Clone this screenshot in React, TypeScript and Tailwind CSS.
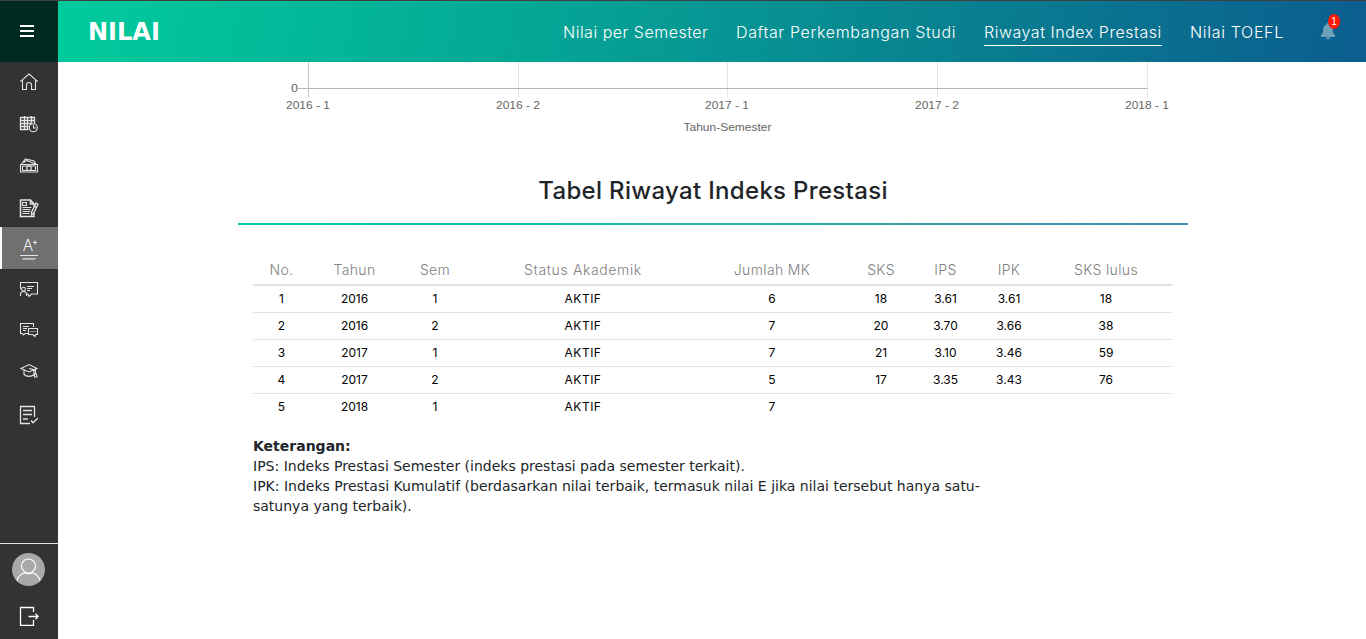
import type { ReactNode } from "react";

const NAV = [
  { label: "Nilai per Semester", style: "w-[145px] tracking-[0.5px]" },
  { label: "Daftar Perkembangan Studi", style: "w-[220px] tracking-[0.65px]" },
  { label: "Riwayat Index Prestasi", style: "w-[178px] tracking-[0.53px]", active: true },
  { label: "Nilai TOEFL", style: "w-[94px] tracking-[0.68px]" },
];

const COLUMNS = ["No.", "Tahun", "Sem", "Status Akademik", "Jumlah MK", "SKS", "IPS", "IPK", "SKS lulus"];

const ROWS = [
  ["1", "2016", "1", "AKTIF", "6", "18", "3.61", "3.61", "18"],
  ["2", "2016", "2", "AKTIF", "7", "20", "3.70", "3.66", "38"],
  ["3", "2017", "1", "AKTIF", "7", "21", "3.10", "3.46", "59"],
  ["4", "2017", "2", "AKTIF", "5", "17", "3.35", "3.43", "76"],
  ["5", "2018", "1", "AKTIF", "7", "", "", "", ""],
];

const TICKS = [
  { label: "2016 - 1", x: 48 },
  { label: "2016 - 2", x: 258 },
  { label: "2017 - 1", x: 467 },
  { label: "2017 - 2", x: 677 },
  { label: "2018 - 1", x: 887 },
];

function Icon({ children, h = 20, w = 20 }: { children: ReactNode; h?: number; w?: number }) {
  return (
    <svg width={w} height={h} viewBox={`0 0 ${w} ${h}`} fill="none" stroke="#e4e4e4" strokeWidth="1.1" className="block shrink-0">
      {children}
    </svg>
  );
}

const HomeIcon = () => (
  <Icon>
    <path d="M1.2 9.6 10 2l8.800 7.600M3.500 8v9.500h4V13a2.500 2.500 0 0 1 5 0v4.500h4V8" />
  </Icon>
);

const CalendarIcon = () => (
  <Icon>
    <path d="M1.500 3.500h14v6M1.500 3v12.500h8M1.500 6.500h14M1.500 9.500h11M1.500 12.500h8M5.500 2v13.500M8.500 3v12.500M12.500 2v7.500" strokeWidth="1.300" />
    <circle cx="14.300" cy="13.800" r="4" />
    <path d="M14.500 11v3h2.500" />
  </Icon>
);

const MoneyIcon = () => (
  <Icon>
    <path d="M1.500 8.500h17v7.500h-17zM3.500 10v4.500h13V10h-13M2.500 8l4-5 3 1M4.500 6.500l3-2 9 3.500M9 3.500l6 1.500 2 3" />
    <circle cx="10" cy="12.200" r="2.300" />
  </Icon>
);

const NotesIcon = () => (
  <Icon>
    <path d="M1.500 2h10l3.500 4v2M1.500 1.500v17h13.500v-4M11.500 2v4H15" strokeWidth="1.500" />
    <path d="M3.500 4.500h4v3h-4zM3.500 9.500h9M3.500 11.500h8M3.500 13.500h8M3.500 15.500h7" />
    <path d="m17 5 2 1.500-4.500 9-2 1.500.2-3zM15.500 8l2 1.500" strokeWidth="1.300" />
  </Icon>
);

const GradeIcon = () => (
  <Icon h={24}>
    <text x="3.800" y="15.300" fontSize="15.500" fontWeight="300" fill="#eee" stroke="none" fontFamily="Inter, sans-serif">A</text>
    <path d="M14 6.500h4M16 4.500v4M1 19.500h18M3.500 22.900h13" strokeWidth="1.200" />
  </Icon>
);

const LectureIcon = () => (
  <Icon>
    <path d="M1.500 10V3.500h17v11.500h-6l-2.500 2.500-1-2.500H7.500M8 7.500h7M8 9.500h5M8 11.500h3" />
    <circle cx="4.500" cy="10.200" r="1.900" />
    <path d="M1.500 17v-1.500a3 3 0 0 1 6 0V17" />
  </Icon>
);

const ChatIcon = () => (
  <Icon>
    <path d="M9 13.500H6l-1.500 1.500-1-1.500h-2v-10h13V7M4 6.500h6M4 8.500h4M4 10.500h3" />
    <path d="M9.500 8.500h9v6h-2l-.5 2-2.500-2h-4zM11.500 11.500h1m1 0h1m1 0h1" />
  </Icon>
);

const GraduationIcon = () => (
  <Icon>
    <path d="m2 7.500 8-4 8 4-8 3.500zM5 9v4.500c2.500 2.500 7.500 2.500 10 0V9M10 7.500l6.500 1.500v4M15.500 13h2l.5 3h-2.500z" />
  </Icon>
);

const ChecklistIcon = () => (
  <Icon>
    <path d="M15.500 12V1.500h-14v17H11" strokeWidth="1.300" />
    <path d="M4 5.500h9M4 9.500h9M4 14h5" strokeWidth="1.400" />
    <path d="m12 15.500 2 2.200 4.800-4.400" strokeWidth="1.400" />
  </Icon>
);

const MENU = [
  { name: "home", icon: <HomeIcon />, style: "h-[41px] pb-[2px]" },
  { name: "schedule", icon: <CalendarIcon />, style: "h-[42px]" },
  { name: "payment", icon: <MoneyIcon />, style: "h-[41px]" },
  { name: "notes", icon: <NotesIcon />, style: "h-[41px] pt-[2px]" },
  { name: "grades", icon: <GradeIcon />, style: "h-[42px] bg-[#707070] border-l-2 border-white pr-[2px]" },
  { name: "lecture", icon: <LectureIcon />, style: "h-[41px] pb-[2px]" },
  { name: "chat", icon: <ChatIcon />, style: "h-[41px] pb-[2px]" },
  { name: "graduation", icon: <GraduationIcon />, style: "h-[41px] pb-[2px]" },
  { name: "survey", icon: <ChecklistIcon />, style: "h-[42px] pt-[3px]" },
];

function Sidebar() {
  return (
    <aside className="flex w-[58px] shrink-0 flex-col bg-[#333]">
      {MENU.map((m) => (
        <a key={m.name} className={`flex shrink-0 items-center justify-center ${m.style}`}>
          {m.icon}
        </a>
      ))}
      <div className="mt-auto flex h-24 shrink-0 flex-col items-center border-t border-[#e0e0e0] pt-[9px]">
        <svg width="33" height="33" viewBox="0 0 33 33" className="mr-px block">
          <circle cx="16.500" cy="16.500" r="16.500" fill="#a9a9a9" />
          <circle cx="16.500" cy="13" r="7" fill="none" stroke="#fff" strokeWidth="1.200" />
          <path d="M5 27.500c1-4 4-6.500 7.500-7.700 2.500 1.200 5.500 1.200 8 0 3.500 1.200 6.500 3.700 7.500 7.700" fill="none" stroke="#fff" strokeWidth="1.200" />
        </svg>
        <svg width="20" height="20" viewBox="0 0 20 20" fill="none" stroke="#fff" strokeWidth="1.300" className="mt-5 block">
          <path d="M14.500 6V1.500h-13v18h13V14M9.500 10.500h9.500M16.500 7.800l2.700 2.700-2.700 2.700" />
        </svg>
      </div>
    </aside>
  );
}

function Header() {
  return (
    <header className="flex h-[62px] shrink-0 border-t border-[#3f3f3f] bg-[linear-gradient(100deg,#00d09d_0%,#05a596_40%,#087f90_71%,#0b5d8f_100%)]">
      <div className="flex w-[58px] items-center bg-black/80 pb-[2px] pl-5">
        <div className="flex w-[14px] flex-col gap-[3px]">
          <i className="h-[2px] bg-white" />
          <i className="h-[2px] bg-white" />
          <i className="h-[2px] bg-white" />
        </div>
      </div>
      <h1 className="ml-[30px] mt-[13px] font-['DejaVu_Sans',sans-serif] text-[24px] leading-9 font-bold text-white">NILAI</h1>
      <nav className="ml-auto flex gap-7 pt-[19px] font-[Inter,sans-serif] text-[16px] leading-6 font-light text-white">
        {NAV.map((n) => (
          <a key={n.label} className={`h-[26px] whitespace-nowrap ${n.style} ${n.active ? "border-b border-white" : ""}`}>
            {n.label}
          </a>
        ))}
      </nav>
      <div className="relative ml-[36px] mr-[30px] w-4 pt-[22px]">
        <svg width="16" height="17" viewBox="0 0 16 17" fill="#6da1b8" className="block">
          <path d="M8 0c.8 0 1.100.5 1.100 1.200C11.800 1.800 12.800 4 12.800 6.500c0 3.200.7 4.200 2.200 5.600v1.900H1v-1.900c1.500-1.400 2.200-2.400 2.200-5.600 0-2.500 1-4.700 3.700-5.300C6.900.5 7.200 0 8 0zM6 14.600h4a2 2 0 0 1-4 0z" />
        </svg>
        <span className="absolute left-[8px] top-[13px] flex h-[15px] w-3 items-center justify-center rounded-[50%] bg-[#ff1a05] font-['Liberation_Sans',sans-serif] text-[10px] leading-none text-white">1</span>
      </div>
    </header>
  );
}

function ChartAxis() {
  return (
    <svg width="950" height="80" className="block font-['Liberation_Sans',Arial,sans-serif] text-[11px]" fill="#666">
      <path d="M60 26.500H909.500" stroke="#b5b5b5" />
      <path d="M280.500 0v35M489.500 0v35M699.500 0v35M909.500 0v35" stroke="#000" strokeOpacity="0.100" />
      <path d="M70.500 0v35" stroke="#c4c4c4" />
      <text x="53" y="30" textLength="7" lengthAdjust="spacingAndGlyphs">0</text>
      {TICKS.map((t) => (
        <text key={t.label} x={t.x} y="47" textLength="44" lengthAdjust="spacingAndGlyphs">{t.label}</text>
      ))}
      <text x="445.500" y="69" textLength="88" lengthAdjust="spacingAndGlyphs">Tahun-Semester</text>
    </svg>
  );
}

export default function App() {
  return (
    <div className="flex h-[639px] w-[1366px] flex-col overflow-hidden bg-white text-[#212529]">
      <Header />
      <div className="flex min-h-0 flex-1">
        <Sidebar />
        <main className="ml-[180px] w-[950px]">
          <ChartAxis />
          <h2 className="mt-[31px] text-center font-[Inter,sans-serif] text-[24px] leading-9 font-medium tracking-[0.320px] whitespace-nowrap">Tabel Riwayat Indeks Prestasi</h2>
          <div className="mt-[14px] h-[2px] bg-[linear-gradient(90deg,#00cdb0,#478daa)]" />
          <table className="mt-[31px] ml-[15px] w-[919px] table-fixed border-collapse text-center font-[Inter,sans-serif]">
            <colgroup>
              <col className="w-[57px]" />
              <col className="w-[89px]" />
              <col className="w-[72px]" />
              <col className="w-[224px]" />
              <col className="w-[154px]" />
              <col className="w-[64px]" />
              <col className="w-[65px]" />
              <col className="w-[62px]" />
              <col className="w-[132px]" />
            </colgroup>
            <thead>
              <tr className="h-[29px] border-b-2 border-[#dee2e6] text-[14px] leading-5 text-[#808080]">
                {COLUMNS.map((c) => (
                  <th key={c} className={`p-0 font-light whitespace-nowrap ${c === "Status Akademik" ? "tracking-[0.630px]" : "tracking-[0.350px]"}`}>{c}</th>
                ))}
              </tr>
            </thead>
            <tbody>
              {ROWS.map((row) => (
                <tr key={row[0]} className="h-[27px] border-b border-[#dee2e6] text-[12px] leading-[18px] text-black last:border-b-0">
                  {row.map((cell, i) => (
                    <td key={i} className={i === 3 ? "p-0 tracking-[0.500px]" : "p-0"}>{cell}</td>
                  ))}
                </tr>
              ))}
            </tbody>
          </table>
          <div className="mt-[16px] ml-[15px] w-[735px] font-['DejaVu_Sans',sans-serif] text-[14px] leading-5">
            <p className="font-bold">Keterangan:</p>
            <p>IPS: Indeks Prestasi Semester (indeks prestasi pada semester terkait).</p>
            <p>IPK: Indeks Prestasi Kumulatif (berdasarkan nilai terbaik, termasuk nilai E jika nilai tersebut hanya satu-satunya yang terbaik).</p>
          </div>
        </main>
      </div>
    </div>
  );
}
